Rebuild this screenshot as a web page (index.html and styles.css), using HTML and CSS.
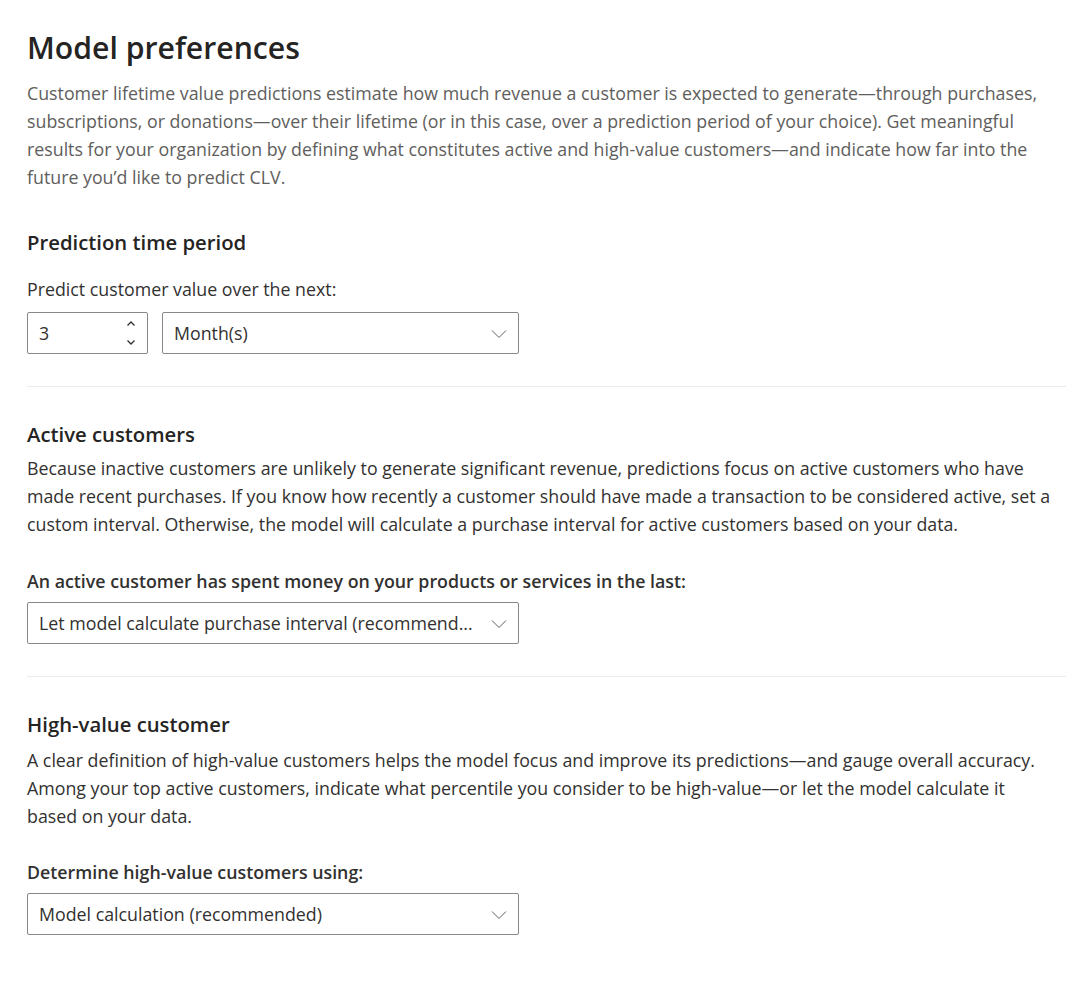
FILE: index.html
```html
<!DOCTYPE html>
<html lang="en">
<head>
<meta charset="utf-8">
<title>Model preferences</title>
<link rel="stylesheet" href="styles.css">
</head>
<body>
<main class="page">
  <h1 class="title">Model preferences</h1>
  <p class="intro">Customer lifetime value predictions estimate how much revenue a customer is expected to generate—through purchases, subscriptions, or donations—over their lifetime (or in this case, over a prediction period of your choice). Get meaningful results for your organization by defining what constitutes active and high-value customers—and indicate how far into the future you’d like to predict CLV.</p>

  <section class="section first">
    <h2 class="heading">Prediction time period</h2>
    <div class="label plain">Predict customer value over the next:</div>
    <div class="row">
      <div class="field spin">
        <span class="value">3</span>
        <span class="arrows">
          <svg width="10" height="7" viewBox="0 0 10 7"><path d="M1.5 5.5 L5 2 L8.5 5.5" fill="none" stroke="#323130" stroke-width="1.3"/></svg>
          <svg width="10" height="7" viewBox="0 0 10 7"><path d="M1.5 1.5 L5 5 L8.5 1.5" fill="none" stroke="#323130" stroke-width="1.3"/></svg>
        </span>
      </div>
      <div class="field select narrow">
        <span class="value">Month(s)</span>
        <svg class="chev" width="16" height="10" viewBox="0 0 16 10"><path d="M1 1.5 L8 8.5 L15 1.5" fill="none" stroke="#605e5c" stroke-width="1"/></svg>
      </div>
    </div>
  </section>

  <hr class="divider">

  <section class="section">
    <h2 class="heading">Active customers</h2>
    <p class="text">Because inactive customers are unlikely to generate significant revenue, predictions focus on active customers who have made recent purchases. If you know how recently a customer should have made a transaction to be considered active, set a custom interval. Otherwise, the model will calculate a purchase interval for active customers based on your data.</p>
    <div class="label bold">An active customer has spent money on your products or services in the last:</div>
    <div class="field select wide">
      <span class="value">Let model calculate purchase interval (recommend...</span>
      <svg class="chev" width="16" height="10" viewBox="0 0 16 10"><path d="M1 1.5 L8 8.5 L15 1.5" fill="none" stroke="#605e5c" stroke-width="1"/></svg>
    </div>
  </section>

  <hr class="divider">

  <section class="section last">
    <h2 class="heading">High-value customer</h2>
    <p class="text">A clear definition of high-value customers helps the model focus and improve its predictions—and gauge overall accuracy. Among your top active customers, indicate what percentile you consider to be high-value—or let the model calculate it based on your data.</p>
    <div class="label bold">Determine high-value customers using:</div>
    <div class="field select wide">
      <span class="value">Model calculation (recommended)</span>
      <svg class="chev" width="16" height="10" viewBox="0 0 16 10"><path d="M1 1.5 L8 8.5 L15 1.5" fill="none" stroke="#605e5c" stroke-width="1"/></svg>
    </div>
  </section>
</main>
</body>
</html>
```

FILE: styles.css
```css
* { box-sizing: border-box; }
html, body { margin: 0; padding: 0; background: #ffffff; }
body {
  font-family: "Open Sans", "Noto Sans", sans-serif;
  color: #323130;
  font-size: 17.8px;
}
.page {
  padding: 28px 0 40px 27px;
  width: 1066px;
}
.title {
  margin: 0;
  font-size: 30.2px;
  font-weight: 600;
  line-height: 40px;
  color: #252423;
}
.intro {
  margin: 11px 0 0;
  color: #605e5c;
  line-height: 28px;
  padding-right: 10px;
}
.section.first { margin-top: 37px; }
.heading {
  margin: 0;
  font-size: 20.3px;
  font-weight: 600;
  line-height: 28px;
  color: #252423;
}
.label {
  line-height: 28px;
}
.label.plain { margin-top: 19px; }
.label.bold { font-weight: 600; margin-top: 29px; }
.text {
  margin: 6px 0 0;
  line-height: 28px;
  padding-right: 10px;
}
.section.last .text { margin-top: 8px; }
.section.last .label.bold { margin-top: 28px; }
.row {
  display: flex;
  gap: 14px;
  margin-top: 9px;
}
.field {
  height: 42px;
  border: 1px solid #8a8886;
  border-radius: 2px;
  display: flex;
  align-items: center;
  background: #fff;
}
.label.bold + .field { margin-top: 7px; }
.spin {
  width: 121px;
  padding-left: 11px;
  justify-content: space-between;
  padding-right: 11px;
}
.arrows {
  display: flex;
  flex-direction: column;
  gap: 12px;
  margin-top: 0;
}
.arrows svg { display: block; }
.select {
  padding: 0 11px 0 11px;
  justify-content: space-between;
}
.select.narrow { width: 357px; }
.select.wide { width: 492px; }
.value { white-space: nowrap; }
.chev { display: block; margin-top: 1px; }
.divider {
  border: 0;
  border-top: 1px solid #edebe9;
  margin: 32px 0 33px;
}
```
